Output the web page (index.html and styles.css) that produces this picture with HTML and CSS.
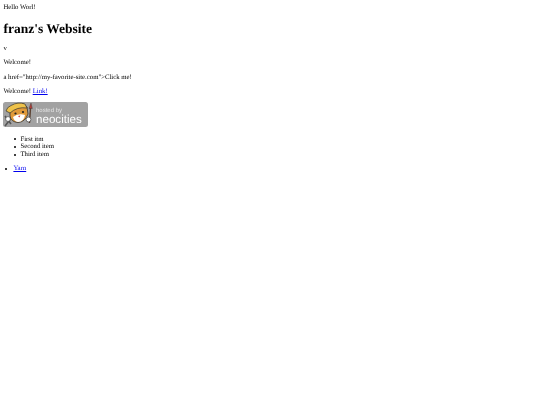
FILE: index.html
```html
<!DOCTYPE html>
<html>
<head>
<meta charset="utf-8">
<title>franz's Website</title>
<link rel="stylesheet" href="styles.css">
</head>
<body>
<p class="first">Hello Worl!</p>
<h1>franz's Website</h1>
<p>v</p>
<p>Welcome!</p>
<p>a href="http://my-favorite-site.com"&gt;Click me!</p>
<p>Welcome! <a href="#">Link!</a></p>
<svg class="badge" viewBox="0 0 85 25" aria-label="hosted by neocities">
  <rect x="0" y="0" width="85" height="25" rx="2.5" fill="#a2a2a2"/>
  <path d="M2 24 L9 15 M2 14 L8 22" stroke="#555" stroke-width="1.6" fill="none"/>
  <circle cx="5" cy="17" r="2.4" fill="#fff" stroke="#333" stroke-width=".6"/>
  <path d="M7 8 L11 3 L20 1.5 L24 5 L25 12 Q22 20 15 20.5 Q8 20 7 14 Z" fill="#e09a3a" stroke="#333" stroke-width=".8"/>
  <path d="M3 9 Q4 5 8 3.5 Q15 -0.5 22 2 L24 6 Q14 4.5 7 11 Z" fill="#eec24a" stroke="#333" stroke-width=".7"/>
  <path d="M10 15 Q15 11 22 13 Q21 19.5 15 20 Q11 19.5 10 15 Z" fill="#fff"/>
  <circle cx="12.5" cy="11.5" r="1.1" fill="#222"/>
  <circle cx="20" cy="10" r="1.1" fill="#222"/>
  <path d="M15 14 L17.4 13.6 L16.4 15.6 Z" fill="#c33"/>
  <path d="M26.5 21 L27.5 6" stroke="#5a4030" stroke-width="1.4"/>
  <path d="M26 6.5 L28 1 L29.3 6.5 Z" fill="#b5403a" stroke="#333" stroke-width=".4"/>
  <circle cx="25.5" cy="17.5" r="2.4" fill="#fff" stroke="#333" stroke-width=".6"/>
  <text x="33" y="9.5" class="hosted">hosted by</text>
  <text x="33" y="20.5" class="neo">neocities</text>
</svg>
<ul>
  <li>First itm</li>
  <li>Second item</li>
  <li>Third item</li>
</ul>
<ul class="links">
  <li><a href="#">Yarn</a></li>
</ul>
</body>
</html>
```
FILE: styles.css
```css
html { background: #fff; }
body {
  margin: 4px 3.4px 3.4px;
  font-family: "Liberation Serif", serif;
  font-size: 6.75px;
  line-height: 7.6px;
  color: #000;
  text-rendering: geometricPrecision;
  filter: blur(0.25px);
}
p { margin: 6.75px 0; }
p.first { margin-top: 0; }
h1 { font-size: 13.5px; line-height: 15.5px; font-weight: bold; margin: 9px 0; }
a { color: #00e; }
.badge { display: block; width: 85px; height: 25px; margin-bottom: 8.2px; }
.hosted { font-family: "Liberation Sans", sans-serif; font-size: 6px; fill: #e4e4e4; }
.neo { font-family: "Liberation Sans", sans-serif; font-size: 11.6px; fill: #fff; }
ul { margin: 6.75px 0; padding-left: 17px; list-style: none; }
li { display: flex; align-items: center; }
li::before {
  content: "";
  flex: none;
  width: 2px;
  height: 2px;
  border-radius: 50%;
  background: #000;
  margin-left: -6.3px;
  margin-right: 4.3px;
}
ul.links { padding-left: 10px; }
.links li::before { margin-left: -8.5px; margin-right: 6.5px; }
```
